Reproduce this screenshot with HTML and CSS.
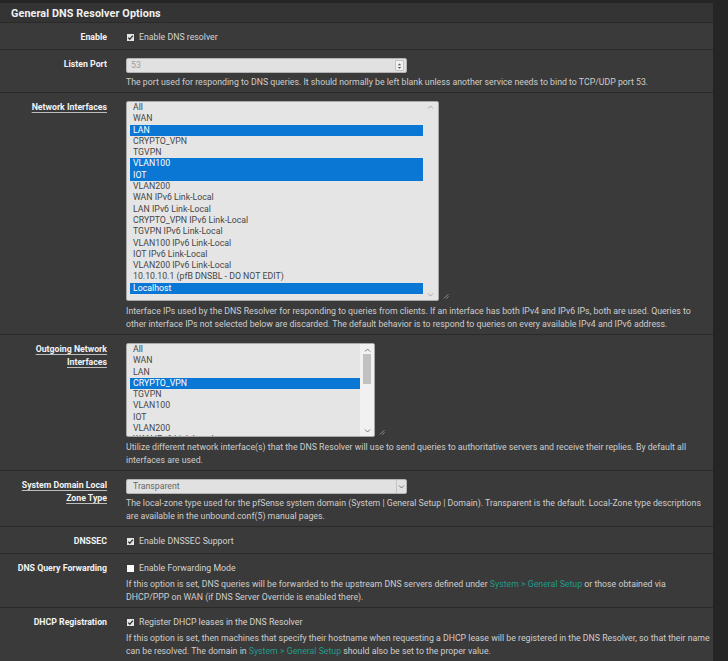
FILE: index.html
```html
<!DOCTYPE html>
<html lang="en">
<head>
<meta charset="utf-8">
<title>General DNS Resolver Options</title>
<link rel="stylesheet" href="styles.css">
</head>
<body>
<div class="panel">
  <div class="panel-heading"><h2 class="panel-title">General DNS Resolver Options</h2></div>
  <div class="panel-body">

    <div class="form-row">
      <div class="lbl">Enable</div>
      <div class="fld">
        <div class="check"><span class="cb on"><svg viewBox="0 0 7 7" width="7" height="7"><path d="M1.2 3.6 L2.8 5.2 L5.9 1.6" fill="none" stroke="#333" stroke-width="1.3"/></svg></span>Enable DNS resolver</div>
      </div>
    </div>

    <div class="form-row">
      <div class="lbl">Listen Port</div>
      <div class="fld">
        <div class="num"><span class="num-val">53</span><span class="spin"><svg viewBox="0 0 8 10" width="8" height="10"><path d="M2 4 L4 2 L6 4 Z M2 6 L4 8 L6 6 Z" fill="#555"/></svg></span></div>
        <div class="help help-num">The port used for responding to DNS queries. It should normally be left blank unless another service needs to bind to TCP/UDP port 53.</div>
      </div>
    </div>

    <div class="form-row">
      <div class="lbl"><span class="req">Network Interfaces</span></div>
      <div class="fld">
        <div class="list-wrap">
          <div class="listbox lb-net" role="listbox" aria-multiselectable="true">
            <div class="opts">
              <div class="opt" role="option">All</div>
              <div class="opt" role="option">WAN</div>
              <div class="opt sel" role="option">LAN</div>
              <div class="opt" role="option">CRYPTO_VPN</div>
              <div class="opt" role="option">TGVPN</div>
              <div class="opt sel" role="option">VLAN100</div>
              <div class="opt sel" role="option">IOT</div>
              <div class="opt" role="option">VLAN200</div>
              <div class="opt" role="option">WAN IPv6 Link-Local</div>
              <div class="opt" role="option">LAN IPv6 Link-Local</div>
              <div class="opt" role="option">CRYPTO_VPN IPv6 Link-Local</div>
              <div class="opt" role="option">TGVPN IPv6 Link-Local</div>
              <div class="opt" role="option">VLAN100 IPv6 Link-Local</div>
              <div class="opt" role="option">IOT IPv6 Link-Local</div>
              <div class="opt" role="option">VLAN200 IPv6 Link-Local</div>
              <div class="opt" role="option">10.10.10.1 (pfB DNSBL - DO NOT EDIT)</div>
              <div class="opt sel" role="option">Localhost</div>
            </div>
            <div class="vscroll">
              <svg class="arrow" viewBox="0 0 7 4" width="7" height="4"><path d="M1 3.5 L3.5 1 L6 3.5" fill="none" stroke="#a8a8a8" stroke-width="1"/></svg>
              <svg class="arrow" viewBox="0 0 7 4" width="7" height="4"><path d="M1 0.5 L3.5 3 L6 0.5" fill="none" stroke="#a8a8a8" stroke-width="1"/></svg>
            </div>
          </div>
          <svg class="grip" viewBox="0 0 6 6" width="6" height="6"><path d="M5.5 1 L1 5.5 M5.5 3.5 L3.5 5.5" stroke="#8a8a8a" stroke-width="1"/></svg>
        </div>
        <div class="help help-list">Interface IPs used by the DNS Resolver for responding to queries from clients. If an interface has both IPv4 and IPv6 IPs, both are used. Queries to other interface IPs not selected below are discarded. The default behavior is to respond to queries on every available IPv4 and IPv6 address.</div>
      </div>
    </div>

    <div class="form-row">
      <div class="lbl"><span class="req">Outgoing Network</span><br><span class="req">Interfaces</span></div>
      <div class="fld">
        <div class="list-wrap">
          <div class="listbox lb-out" role="listbox" aria-multiselectable="true">
            <div class="opts">
              <div class="opt" role="option">All</div>
              <div class="opt" role="option">WAN</div>
              <div class="opt" role="option">LAN</div>
              <div class="opt sel" role="option">CRYPTO_VPN</div>
              <div class="opt" role="option">TGVPN</div>
              <div class="opt" role="option">VLAN100</div>
              <div class="opt" role="option">IOT</div>
              <div class="opt" role="option">VLAN200</div>
              <div class="opt" role="option">WAN IPv6 Link-Local</div>
              <div class="opt" role="option">LAN IPv6 Link-Local</div>
            </div>
            <div class="vscroll vs-out">
              <svg class="arrow" viewBox="0 0 7 4" width="7" height="4"><path d="M1 3.5 L3.5 1 L6 3.5" fill="none" stroke="#777" stroke-width="1"/></svg>
              <div class="track"><div class="thumb"></div></div>
              <svg class="arrow" viewBox="0 0 7 4" width="7" height="4"><path d="M1 0.5 L3.5 3 L6 0.5" fill="none" stroke="#777" stroke-width="1"/></svg>
            </div>
          </div>
          <svg class="grip" viewBox="0 0 6 6" width="6" height="6"><path d="M5.5 1 L1 5.5 M5.5 3.5 L3.5 5.5" stroke="#8a8a8a" stroke-width="1"/></svg>
        </div>
        <div class="help help-list2">Utilize different network interface(s) that the DNS Resolver will use to send queries to authoritative servers and receive their replies. By default all interfaces are used.</div>
      </div>
    </div>

    <div class="form-row">
      <div class="lbl"><span class="req">System Domain Local</span><br><span class="req">Zone Type</span></div>
      <div class="fld">
        <div class="select"><span class="sel-val">Transparent</span><span class="sel-arr"><svg viewBox="0 0 7 4" width="7" height="4"><path d="M1 0.5 L3.5 3 L6 0.5" fill="none" stroke="#777" stroke-width="1"/></svg></span></div>
        <div class="help">The local-zone type used for the pfSense system domain (System | General Setup | Domain). Transparent is the default. Local-Zone type descriptions are available in the unbound.conf(5) manual pages.</div>
      </div>
    </div>

    <div class="form-row">
      <div class="lbl">DNSSEC</div>
      <div class="fld">
        <div class="check"><span class="cb on"><svg viewBox="0 0 7 7" width="7" height="7"><path d="M1.2 3.6 L2.8 5.2 L5.9 1.6" fill="none" stroke="#333" stroke-width="1.3"/></svg></span>Enable DNSSEC Support</div>
      </div>
    </div>

    <div class="form-row">
      <div class="lbl">DNS Query Forwarding</div>
      <div class="fld">
        <div class="check"><span class="cb off"></span>Enable Forwarding Mode</div>
        <div class="help">If this option is set, DNS queries will be forwarded to the upstream DNS servers defined under <a href="#">System &gt; General Setup</a> or those obtained via DHCP/PPP on WAN (if DNS Server Override is enabled there).</div>
      </div>
    </div>

    <div class="form-row">
      <div class="lbl">DHCP Registration</div>
      <div class="fld">
        <div class="check"><span class="cb on"><svg viewBox="0 0 7 7" width="7" height="7"><path d="M1.2 3.6 L2.8 5.2 L5.9 1.6" fill="none" stroke="#333" stroke-width="1.3"/></svg></span>Register DHCP leases in the DNS Resolver</div>
        <div class="help">If this option is set, then machines that specify their hostname when requesting a DHCP lease will be registered in the DNS Resolver, so that their name can be resolved. The domain in <a href="#">System &gt; General Setup</a> should also be set to the proper value.</div>
      </div>
    </div>

  </div>
</div>
</body>
</html>
```

FILE: styles.css
```css
* { box-sizing: border-box; }

html, body {
  margin: 0;
  padding: 0;
}

body {
  width: 728px;
  height: 661px;
  overflow: hidden;
  background: #252525;
  font-family: Roboto, "Liberation Sans", Arial, sans-serif;
  font-size: 8.75px;
  line-height: 13px;
  color: #cdcdcd;
}

.panel {
  width: 713px;
  margin-top: 3px;
  background: #3a3a3a;
}

.panel-heading {
  height: 19px;
  padding: 2px 0 0 11px;
  background: #343434;
}

.panel-title {
  margin: 0;
  font-size: 10.8px;
  font-weight: 700;
  line-height: 18px;
  color: #f0f0f0;
  letter-spacing: 0.1px;
}

.form-row {
  display: flex;
  border-top: 1px solid #2a2a2a;
  padding: 8px 0 3px;
}

.lbl {
  flex: none;
  width: 117px;
  padding-right: 10px;
  text-align: right;
  font-weight: 700;
  color: #f2f2f2;
}

.req {
  text-decoration: underline;
  text-decoration-color: #bdbdbd;
  text-underline-offset: 2px;
}

.fld {
  flex: 1;
  min-width: 0;
  padding-left: 9px;
  padding-right: 2px;
}

.help {
  margin-top: 3px;
}

.help a {
  color: #1f9c87;
  text-decoration: none;
}

.help-num { margin-top: 3px; }
.help-list { margin-top: 4px; }
.help-list2 { margin-top: 4px; }

/* checkbox */
.check {
  display: flex;
  align-items: center;
  margin-bottom: 2px;
  color: #d2d2d2;
}

.cb {
  flex: none;
  width: 7px;
  height: 7px;
  margin: 0 5px 0 1px;
  display: flex;
}

.cb.on { background: #e6e6e6; }
.cb.off { background: #fbfbfb; }

/* number input */
.num {
  width: 281px;
  height: 15px;
  display: flex;
  align-items: center;
  justify-content: space-between;
  padding: 0 2px 0 4px;
  border: 1px solid #b3b3b3;
  border-radius: 2px;
  background: #e1e1e1;
  color: #9c9c9c;
}

.spin {
  width: 9px;
  height: 11px;
  display: flex;
  align-items: center;
  justify-content: center;
  border: 1px solid #c2c2c2;
  border-radius: 1px;
  background: #f1f1f1;
}

/* listbox */
.list-wrap {
  display: flex;
  align-items: flex-end;
}

.listbox {
  display: flex;
  border: 1px solid #a9a9a9;
  border-radius: 2px;
  background: #e5e5e5;
  overflow: hidden;
}

.lb-net { width: 313px; height: 200px; }
.lb-out { width: 249px; height: 94px; }

.opts {
  flex: 1;
  min-width: 0;
  padding-left: 3px;
  overflow: hidden;
}

.opt {
  height: 11.3px;
  line-height: 11.3px;
  padding-left: 3px;
  color: #474747;
  white-space: nowrap;
}

.opt.sel {
  background: #0a77d5;
  color: #ffffff;
}

.vscroll {
  flex: none;
  width: 15px;
  display: flex;
  flex-direction: column;
  justify-content: space-between;
  align-items: center;
  padding: 3px 0 3px;
}

.vs-out {
  width: 14px;
  padding: 4px 0 3px;
  background: #f1f1f1;
}

.track {
  flex: 1;
  width: 100%;
  padding: 2px 3px 0;
}

.thumb {
  width: 8px;
  height: 30px;
  background: #c1c1c1;
}

.grip {
  margin: 0 0 2px 4px;
}

/* select */
.select {
  width: 281px;
  height: 15px;
  display: flex;
  border: 1px solid #b3b3b3;
  border-radius: 2px;
  background: #e1e1e1;
}

.sel-val {
  flex: 1;
  padding-left: 6px;
  line-height: 13px;
  color: #666666;
}

.sel-arr {
  width: 10px;
  display: flex;
  align-items: center;
  justify-content: center;
  border-left: 1px solid #c4c4c4;
}
```
